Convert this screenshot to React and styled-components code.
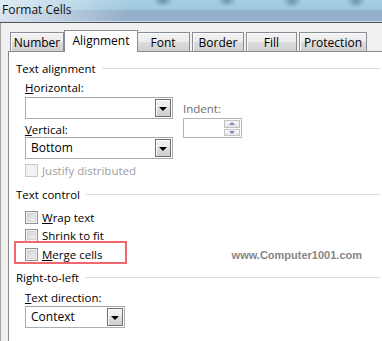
import React from "react";
import styled, { createGlobalStyle } from "styled-components";

const Global = createGlobalStyle`
  html, body { margin: 0; padding: 0; }
  body { width: 382px; height: 341px; overflow: hidden; background: #f0f0f0; }
  * { box-sizing: border-box; }
`;

const FONT = `"Open Sans", "Noto Sans", "Liberation Sans", sans-serif`;

const Window = styled.div`
  width: 382px;
  height: 341px;
  display: flex;
  flex-direction: column;
  background: #f0f0f0;
  font-family: ${FONT};
  font-size: 11.5px;
  color: #000;
  overflow: hidden;
`;

const TitleBar = styled.div`
  height: 23px;
  flex: none;
  display: flex;
  align-items: center;
  padding: 0 0 3px 2px;
  font-size: 12px;
  color: #111;
  border-bottom: 1px solid #4f5357;
  box-shadow: inset 0 -1px 0 #c9dbea;
  background:
    radial-gradient(ellipse 10px 7px at 163px 0px, rgba(60, 100, 115, 0.6), transparent),
    radial-gradient(ellipse 10px 7px at 227px 0px, rgba(60, 100, 115, 0.55), transparent),
    radial-gradient(ellipse 10px 7px at 292px 1px, rgba(60, 100, 115, 0.55), transparent),
    radial-gradient(ellipse 10px 7px at 356px 1px, rgba(60, 100, 115, 0.55), transparent),
    linear-gradient(90deg, rgba(236, 242, 247, 0.8) 0px, rgba(236, 242, 247, 0.45) 60px, rgba(236, 242, 247, 0) 130px),
    linear-gradient(180deg, #a6cee3 0px, #a0c8de 9px, #92aec8 11px, #95b0cb 21px);
`;

const Body = styled.div`
  flex: 1;
  display: flex;
  flex-direction: column;
  padding: 7px 0 0 7px;
  border-left: 1px solid #a4a4a4;
`;

const TabStrip = styled.div`
  display: flex;
  align-items: flex-end;
  padding-left: 2px;
  height: 22px;
  flex: none;
  position: relative;
  z-index: 1;
  margin-bottom: -1px;
`;

const Tab = styled.div`
  width: ${(p) => p.$w}px;
  height: ${(p) => (p.$active ? 22 : 20)}px;
  margin-left: ${(p) => (p.$active ? -2 : 0)}px;
  margin-right: ${(p) => (p.$active ? -2 : 2)}px;
  display: flex;
  align-items: center;
  justify-content: center;
  padding-bottom: ${(p) => (p.$active ? 2 : 0)}px;
  border: 1px solid #898c95;
  border-bottom: ${(p) => (p.$active ? "none" : "1px solid #898c95")};
  position: relative;
  z-index: ${(p) => (p.$active ? 2 : 1)};
  background: ${(p) =>
    p.$active
      ? "#ffffff"
      : "linear-gradient(180deg, #f2f2f2 0%, #ebebeb 50%, #dddddd 51%, #cfcfcf 100%)"};
  box-shadow: ${(p) => (p.$active ? "none" : "inset 1px 1px 0 #fcfcfc")};
  font-size: 12px;
`;

const Panel = styled.div`
  flex: 1;
  background: #fff;
  border: 1px solid #898c95;
  border-right: none;
  border-bottom: none;
  padding: 9px 2px 0 7px;
  display: flex;
  flex-direction: column;
`;

const GroupHeader = styled.div`
  display: flex;
  align-items: center;
  height: 15px;
  margin-top: ${(p) => p.$mt || 0}px;
  gap: 6px;
  &::after {
    content: "";
    flex: 1;
    height: 1px;
    background: #d5dde6;
  }
`;

const GroupBody = styled.div`
  padding-left: 9px;
  display: flex;
  flex-direction: column;
`;

const AlignRow = styled.div`
  display: flex;
  gap: 10px;
  margin-top: 4px;
`;

const Column = styled.div`
  display: flex;
  flex-direction: column;
  padding-top: ${(p) => p.$pt || 0}px;
`;

const Label = styled.div`
  height: 15px;
  line-height: 15px;
  margin-top: ${(p) => p.$mt || 0}px;
  margin-bottom: ${(p) => p.$mb || 0}px;
  color: ${(p) => (p.$disabled ? "#6d6d6d" : "#000")};
  white-space: nowrap;
  u { text-decoration: underline; text-underline-offset: 1px; }
`;

const SelectBox = styled.div`
  width: ${(p) => p.$w}px;
  height: 22px;
  border: 1px solid #abadb3;
  border-top-color: #a1a4ab;
  background: #fff;
  display: flex;
  align-items: center;
  padding: 1px;
`;

const SelectValue = styled.div`
  flex: 1;
  padding-left: 4px;
  font-size: 12px;
  line-height: 18px;
`;

const DropButton = styled.div`
  width: 16px;
  height: 18px;
  border: 1px solid #707070;
  background: linear-gradient(180deg, #f2f2f2 0%, #ebebeb 50%, #dddddd 51%, #cfcfcf 100%);
  box-shadow: inset 1px 1px 0 #fbfbfb;
  display: flex;
  align-items: center;
  justify-content: center;
  &::before {
    content: "";
    width: 0;
    height: 0;
    border-left: 4px solid transparent;
    border-right: 4px solid transparent;
    border-top: 4px solid #000;
    margin-top: 1px;
  }
`;

const Spinner = styled.div`
  width: 59px;
  height: 20px;
  border: 1px solid #b4b4b4;
  background: #fff;
  display: flex;
  justify-content: flex-end;
  padding: 1px;
  margin-top: 2px;
`;

const SpinButtons = styled.div`
  width: 16px;
  display: flex;
  flex-direction: column;
  gap: 1px;
`;

const SpinButton = styled.div`
  flex: 1;
  border: 1px solid #c3c3c3;
  background: linear-gradient(180deg, #f8f8f8, #e4e4e4);
  display: flex;
  align-items: center;
  justify-content: center;
  &::before {
    content: "";
    width: 0;
    height: 0;
    border-left: 3px solid transparent;
    border-right: 3px solid transparent;
    ${(p) => (p.$up ? "border-bottom: 3px solid #7a86a8;" : "border-top: 3px solid #7a86a8;")}
  }
`;

const CheckRow = styled.div`
  display: flex;
  align-items: center;
  gap: 4px;
  height: 15px;
  margin-top: ${(p) => p.$mt || 0}px;
  position: relative;
  color: ${(p) => (p.$disabled ? "#a0a0a0" : "#000")};
  u { text-decoration: underline; text-underline-offset: 1px; }
`;

const Box = styled.span`
  width: 13px;
  height: 13px;
  flex: none;
  border: 1px solid ${(p) => (p.$disabled ? "#c8c8c8" : "#8e8f8f")};
  background: ${(p) =>
    p.$disabled ? "#f4f4f4" : "linear-gradient(135deg, #cbcbcb 0%, #e6e6e6 60%, #f6f6f6 100%)"};
  box-shadow: inset 0 0 0 1px #f4f4f4,
    inset 0 0 0 2px ${(p) => (p.$disabled ? "#ececec" : "#d4d4d4")};
`;

const Highlight = styled.span`
  position: absolute;
  left: -11px;
  top: -6px;
  width: 113px;
  height: 23px;
  border: 2px solid #f0686b;
  pointer-events: none;
`;

const Watermark = styled.span`
  margin-left: auto;
  margin-right: 18px;
  font-family: "Liberation Sans", Arial, sans-serif;
  font-weight: bold;
  font-size: 11px;
  color: #868686;
`;

const tabs = [
  { name: "Number", w: 54 },
  { name: "Alignment", w: 74, active: true },
  { name: "Font", w: 54 },
  { name: "Border", w: 52 },
  { name: "Fill", w: 51 },
  { name: "Protection", w: 68 },
];

export default function App() {
  return (
    <>
      <Global />
      <Window>
        <TitleBar>Format Cells</TitleBar>
        <Body>
          <TabStrip>
            {tabs.map((t) => (
              <Tab key={t.name} $w={t.w} $active={t.active}>
                {t.name}
              </Tab>
            ))}
          </TabStrip>
          <Panel>
            <GroupHeader>Text alignment</GroupHeader>
            <GroupBody>
              <AlignRow>
                <Column>
                  <Label $mb={2}>
                    <u>H</u>orizontal:
                  </Label>
                  <SelectBox $w={148}>
                    <SelectValue />
                    <DropButton />
                  </SelectBox>
                  <Label $mt={3} $mb={0}>
                    <u>V</u>ertical:
                  </Label>
                  <SelectBox $w={148}>
                    <SelectValue>Bottom</SelectValue>
                    <DropButton />
                  </SelectBox>
                  <CheckRow $mt={4} $disabled>
                    <Box $disabled />
                    Justify distributed
                  </CheckRow>
                </Column>
                <Column $pt={21}>
                  <Label $disabled>Indent:</Label>
                  <Spinner>
                    <SpinButtons>
                      <SpinButton $up />
                      <SpinButton />
                    </SpinButtons>
                  </Spinner>
                </Column>
              </AlignRow>
            </GroupBody>

            <GroupHeader $mt={9}>Text control</GroupHeader>
            <GroupBody>
              <CheckRow $mt={8}>
                <Box />
                <span>
                  <u>W</u>rap text
                </span>
              </CheckRow>
              <CheckRow $mt={3}>
                <Box />
                <span>
                  Shrin<u>k</u> to fit
                </span>
              </CheckRow>
              <CheckRow $mt={4}>
                <Highlight />
                <Box />
                <span>
                  <u>M</u>erge cells
                </span>
                <Watermark>www.Computer1001.com</Watermark>
              </CheckRow>
            </GroupBody>

            <GroupHeader $mt={8}>Right-to-left</GroupHeader>
            <GroupBody>
              <Label $mt={5} $mb={1}>
                <u>T</u>ext direction:
              </Label>
              <SelectBox $w={100}>
                <SelectValue>Context</SelectValue>
                <DropButton />
              </SelectBox>
            </GroupBody>
          </Panel>
        </Body>
      </Window>
    </>
  );
}
